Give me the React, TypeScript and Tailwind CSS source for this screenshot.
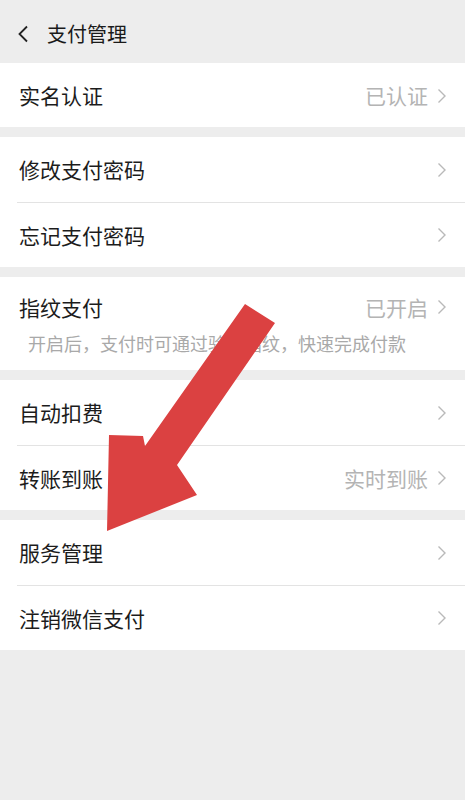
import React from 'react';

type Row = {
    label: string;
    value?: string;
};

const font = { fontFamily: '"Noto Sans CJK SC", "Noto Sans", sans-serif' };

const Chevron: React.FC = () => (
    <svg width="10" height="16" viewBox="0 0 10 16" className="ml-[9px] shrink-0">
        <path d="M1.5 1.5 L8 8 L1.5 14.5" fill="none" stroke="#b9b9b9" strokeWidth="1.4" />
    </svg>
);

const ListRow: React.FC<{ row: Row; divider?: boolean }> = ({ row, divider }) => (
    <div className={divider ? 'pl-[17px] h-[65px]' : 'h-[65px]'}>
        <div
            className={
                divider
                    ? 'h-full flex items-center justify-between pl-[2px] pr-[18px] border-t border-[#e3e3e3]'
                    : 'h-full flex items-center justify-between pl-[19px] pr-[18px]'
            }
        >
            <span className="text-[21px] text-[#1c1c1c] leading-none">{row.label}</span>
            <div className="flex items-center">
                {row.value && <span className="text-[21px] text-[#b4b4b4] leading-none">{row.value}</span>}
                <Chevron />
            </div>
        </div>
    </div>
);

const Group: React.FC<{ rows: Row[] }> = ({ rows }) => (
    <div className="bg-white mt-[10px]">
        {rows.map((row, i) => (
            <ListRow key={row.label} row={row} divider={i > 0} />
        ))}
    </div>
);

export default function App() {
    return (
        <div className="relative w-[465px] min-h-[800px] bg-[#ededed]" style={font}>
            {/* Header */}
            <div className="h-[63px] flex items-center pl-[17px] pt-[5px]">
                <svg width="12" height="18" viewBox="0 0 12 18">
                    <path d="M10 1.5 L2.5 9 L10 16.5" fill="none" stroke="#222" strokeWidth="1.8" />
                </svg>
                <span className="ml-[18px] text-[20px] text-[#1a1a1a] leading-none">支付管理</span>
            </div>

            <div className="bg-white h-[64px]">
                <ListRow row={{ label: '实名认证', value: '已认证' }} />
            </div>

            <Group rows={[{ label: '修改支付密码' }, { label: '忘记支付密码' }]} />

            {/* Fingerprint */}
            <div className="bg-white mt-[10px] pt-[17px] pb-[15px]">
                <div className="flex items-center justify-between pl-[19px] pr-[18px] h-[26px]">
                    <span className="text-[21px] text-[#1c1c1c] leading-none">指纹支付</span>
                    <div className="flex items-center">
                        <span className="text-[21px] text-[#b4b4b4] leading-none">已开启</span>
                        <Chevron />
                    </div>
                </div>
                <p className="mt-[11px] pl-[28px] text-[18px] leading-[24px] text-[#a9a9a9]">
                    开启后，支付时可通过验证指纹，快速完成付款
                </p>
            </div>

            <Group rows={[{ label: '自动扣费' }, { label: '转账到账', value: '实时到账' }]} />
            <Group rows={[{ label: '服务管理' }, { label: '注销微信支付' }]} />

            {/* Red arrow annotation */}
            <svg className="absolute left-0 top-0 pointer-events-none" width="465" height="800" viewBox="0 0 465 800">
                <polygon
                    points="245,304 275,323 177,465 197,495 107,531 109,435 143,436 145,446"
                    fill="#db4141"
                />
            </svg>
        </div>
    );
}
